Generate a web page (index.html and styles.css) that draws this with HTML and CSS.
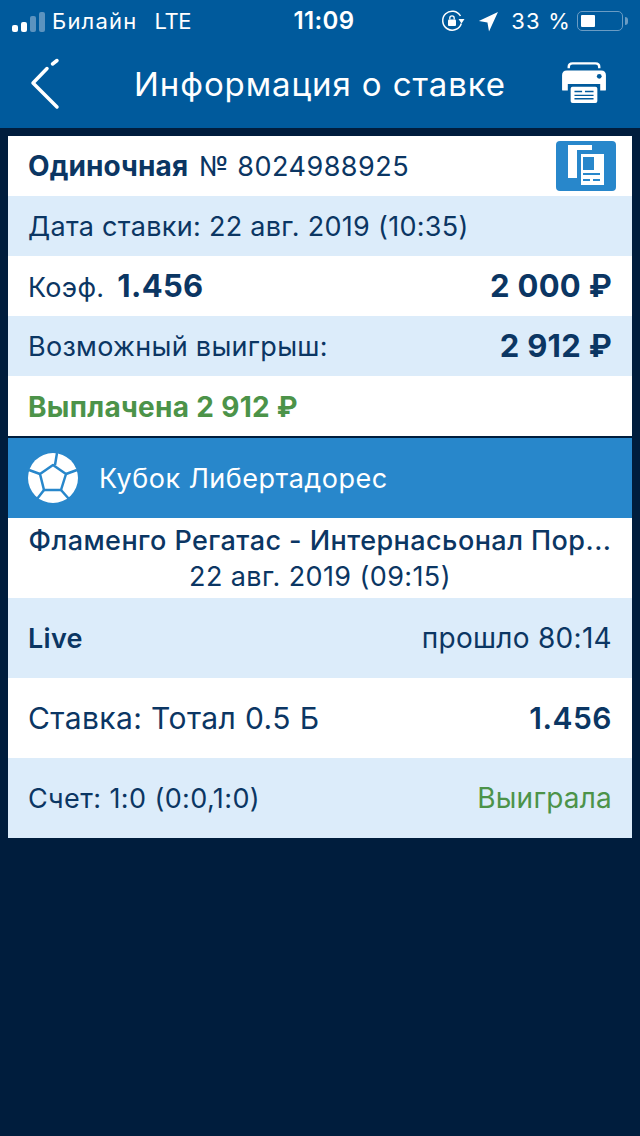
FILE: index.html
```html
<!DOCTYPE html>
<html lang="ru">
<head>
<meta charset="utf-8">
<title>Информация о ставке</title>
<link rel="stylesheet" href="styles.css">
</head>
<body>

<header class="top">
  <div class="status">
    <div class="status-left">
      <span class="signal"><i class="on s1"></i><i class="on s2"></i><i class="s3"></i><i class="s4"></i></span>
      <span class="carrier">Билайн</span>
      <span class="lte">LTE</span>
    </div>
    <div class="status-time">11:09</div>
    <div class="status-right">
      <svg class="lock" width="24" height="24" viewBox="0 0 24 24">
        <path d="M19.500 7A9.500 9.500 0 1 0 20.300 14.500" fill="none" stroke="#fff" stroke-width="1.500"/>
        <path d="M17.500 10h6l-3 4.500z" fill="#fff"/>
        <rect x="7" y="10.500" width="8" height="6.500" rx="1" fill="#fff"/>
        <path d="M8.800 10.500V9a2.200 2.200 0 0 1 4.400 0v1.500" fill="none" stroke="#fff" stroke-width="1.300"/>
      </svg>
      <svg class="arrow" width="21" height="21" viewBox="0 0 20 20"><path d="M19 1L10.500 19.500 9 11 .8 9.500z" fill="#fff"/></svg>
      <span class="pct">33 %</span>
      <span class="battery"><i></i></span><span class="battery-tip"></span>
    </div>
  </div>
  <div class="nav">
    <svg class="back" width="32" height="54" viewBox="0 0 32 54">
      <path d="M22.500 8L27 4.500M17 12.500L3 27l24 24" fill="none" stroke="#fff" stroke-width="3.500" stroke-linecap="round" stroke-linejoin="round"/>
    </svg>
    <h1>Информация о ставке</h1>
    <svg class="printer" width="44" height="41" viewBox="0 0 46 43">
      <path d="M7 6.500V5q0-3.500 4-3.500h24q4 0 4 3.500v1.500" fill="none" stroke="#fff" stroke-width="2.500"/>
      <path d="M5 9h36q5 0 5 5v15q0 1-1 1h-5v-7H6v7H1q-1 0-1-1V14q0-5 5-5z" fill="#fff"/>
      <circle cx="39" cy="15" r="2.500" fill="#005a9c"/>
      <rect x="9" y="26" width="28" height="17" rx="2" fill="#fff"/>
      <path d="M13 31h8M24 31h9M13 35h20M13 38.500h20" stroke="#005a9c" stroke-width="1.500"/>
    </svg>
  </div>
</header>

<main class="card">
  <div class="row row-s white">
    <span><b class="kind">Одиночная</b> <span class="num">№ 8024988925</span></span>
    <span class="copy">
      <svg width="60" height="50" viewBox="0 0 60 50">
        <rect x="12" y="4" width="24" height="33" fill="#fff"/>
        <rect x="21" y="9" width="20" height="30" fill="#2887cb"/>
        <rect x="25" y="13" width="23" height="31" fill="#fff"/>
        <rect x="27" y="16" width="11" height="13" fill="#2887cb"/>
        <path d="M27 33h17M27 39h7M37 39h7" stroke="#2887cb" stroke-width="2"/>
      </svg>
    </span>
  </div>
  <div class="row row-s blue">Дата ставки: 22 авг. 2019 (10:35)</div>
  <div class="row row-s row-flat white">
    <span>Коэф. <b class="big">1.456</b></span>
    <b class="big">2 000 ₽</b>
  </div>
  <div class="row row-s blue">
    <span>Возможный выигрыш:</span>
    <b class="big lift">2 912 ₽</b>
  </div>
  <div class="row row-s row-pay white"><b class="green">Выплачена 2 912 ₽</b></div>

  <div class="league">
    <svg width="50" height="50" viewBox="0 0 50 50">
      <circle cx="25" cy="25" r="25" fill="#fff"/>
      <path d="M25 12L38 21 33 37H16L12 21z" fill="#fff" stroke="#2887cb" stroke-width="2.500" stroke-linejoin="round"/>
      <path d="M27 12L29 0M38 21L49 17M33 37L41 46M16 37L9 46M12 21L1 17" stroke="#2887cb" stroke-width="2.500"/>
    </svg>
    <span class="league-name">Кубок Либертадорес</span>
  </div>

  <div class="match">
    <div class="match-name">Фламенго Регатас - Интернасьонал Пор...</div>
    <div class="match-date">22 авг. 2019 (09:15)</div>
  </div>
  <div class="row row-l blue">
    <b>Live</b>
    <span class="wide">прошло 80:14</span>
  </div>
  <div class="row row-l row-flat white">
    <span class="bet">Ставка: Тотал 0.5 Б</span>
    <b class="odds">1.456</b>
  </div>
  <div class="row row-l blue">
    <span class="score">Счет: 1:0 (0:0,1:0)</span>
    <span class="wide won">Выиграла</span>
  </div>
</main>

</body>
</html>
```

FILE: styles.css
```css
html, body {margin:0; padding:0;}
body {width:640px; height:1136px; overflow:hidden; background-color:#001d3d; color:#0b3663; font:27px/1.2 Inter, "Noto Sans", sans-serif; letter-spacing:.3px;}
b {font-weight:600;}

.top {height:128px; background-color:#005a9c; color:#fff;}
.status {height:43px; display:grid; grid-template-columns:1fr auto 1fr; align-items:center; padding:0 12px; font-size:22px;}
.status-left {display:flex; align-items:center; gap:7px;}
.carrier {letter-spacing:1.200px;}
.lte {margin-left:10px; letter-spacing:-.4px;}
.signal {display:flex; align-items:flex-end; gap:3px; height:22px;}
.signal i {width:6px; border-radius:2px; background-color:#5c93bf;}
.signal .on {background-color:#fff;}
.s1 {height:7px;}
.s2 {height:10px;}
.s3 {height:16px;}
.s4 {height:20px;}
.status-time {margin-left:8px; font-size:24px; font-weight:600; letter-spacing:.4px;}
.status-right {display:flex; align-items:center; justify-content:flex-end;}
.lock {margin-right:13px;}
.arrow {margin-right:12px;}
.pct {letter-spacing:1.200px; margin-right:6px;}
.battery {display:block; width:46px; height:20px; padding:3px; box-sizing:border-box; border:1.500px solid #6a9cc4; border-radius:5px;}
.battery i {display:block; width:14px; height:100%; background-color:#fff; border-radius:1px;}
.battery-tip {display:block; width:3px; height:8px; margin-left:2px; background-color:#6a9cc4; border-radius:0 3px 3px 0;}

.nav {height:85px; display:grid; grid-template-columns:1fr auto 1fr; padding:0 34px;}
.nav h1 {margin:0 0 2px; align-self:center; font-size:33px; font-weight:400; letter-spacing:.9px;}
.back {margin:13px 0 0 -4px;}
.printer {margin-top:19px; justify-self:end;}

.card {margin:8px 8px 0;}
.row {display:flex; align-items:center; justify-content:space-between; padding:2px 20px 0; box-sizing:border-box;}
.row-s {height:60px;}
.row-l {height:80px;}
.row-flat {padding-top:0;}
.row-pay {padding-top:3px;}
.white {background-color:#fff;}
.blue {background-color:#dcecfa;}
.big {font-size:31px; font-weight:700; margin-left:5px;}
.lift {margin-bottom:2px;}
.green, .kind {font-size:28px; font-weight:700;}
.green {color:#4c9349; letter-spacing:.3px;}
.kind {letter-spacing:.1px;}
.num {margin-left:3px; letter-spacing:.5px;}
.copy {width:60px; height:50px; margin:-2px -4px 0 0; background-color:#2887cb; border-radius:4px;}
.copy svg {display:block;}

.league {height:80px; margin-top:2px; display:flex; align-items:center; gap:21px; padding-left:20px; background-color:#2887cb; color:#fff; letter-spacing:.5px;}
.league svg {flex:none;}
.league-name {margin-top:2px;}

.match {height:80px; display:flex; flex-direction:column; align-items:center; justify-content:center; gap:4px; padding-top:2px; box-sizing:border-box; background-color:#fff; text-align:center;}
.match-name {font-weight:500; letter-spacing:.45px;}
.match-date {letter-spacing:.4px;}

.wide {font-size:28px;}
.bet {font-size:30px; letter-spacing:.4px;}
.odds {font-size:30px; font-weight:600; letter-spacing:.5px;}
.score {letter-spacing:.4px;}
.won {color:#4c9349; letter-spacing:.2px;}
```
